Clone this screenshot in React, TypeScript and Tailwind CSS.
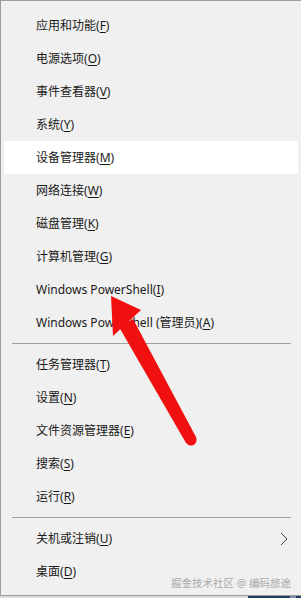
import { Fragment } from "react";

type Item = { label: string; hotkey: string; suffix?: string; active?: boolean; submenu?: boolean };

const groups: Item[][] = [
    [
        { label: "应用和功能", hotkey: "F" },
        { label: "电源选项", hotkey: "O" },
        { label: "事件查看器", hotkey: "V" },
        { label: "系统", hotkey: "Y" },
        { label: "设备管理器", hotkey: "M", active: true },
        { label: "网络连接", hotkey: "W" },
        { label: "磁盘管理", hotkey: "K" },
        { label: "计算机管理", hotkey: "G" },
        { label: "Windows PowerShell", hotkey: "I" },
        { label: "Windows PowerShell (管理员)", hotkey: "A" },
    ],
    [
        { label: "任务管理器", hotkey: "T" },
        { label: "设置", hotkey: "N" },
        { label: "文件资源管理器", hotkey: "E" },
        { label: "搜索", hotkey: "S" },
        { label: "运行", hotkey: "R" },
    ],
    [
        { label: "关机或注销", hotkey: "U", submenu: true },
        { label: "桌面", hotkey: "D" },
    ],
];

function MenuRow({ item }: { item: Item }) {
    return (
        <div
            className={`flex items-center h-[33px] ml-[3px] mr-[3px] pl-[32px] pr-[8px] text-[12px] text-[#1a1a1a] ${
                item.active ? "bg-white" : ""
            }`}
        >
            <span className="flex-1 whitespace-nowrap">
                {item.label}(<span className="underline underline-offset-2">{item.hotkey}</span>)
            </span>
            {item.submenu && (
                <svg width="8" height="14" viewBox="0 0 8 14" className="mr-[2px]">
                    <polyline points="1,1 7,7 1,13" fill="none" stroke="#444" strokeWidth="1" />
                </svg>
            )}
        </div>
    );
}

export default function App() {
    return (
        <div
            className="relative w-[301px] h-[598px] overflow-hidden bg-[#e6e6e6]"
            style={{ fontFamily: '"Noto Sans", "Noto Sans CJK SC", sans-serif' }}
        >
            <div className="bg-[#f0f0f0] border-t border-l border-b border-[#9c9c9c] pt-[8px] pb-[7px]">
                {groups.map((group, i) => (
                    <Fragment key={i}>
                        {i > 0 && (
                            <div className="pt-[4px] pb-[4px]">
                                <div className="h-px ml-[11px] mr-[10px] bg-[#a0a0a0]" />
                            </div>
                        )}
                        {group.map((item) => (
                            <MenuRow key={item.label} item={item} />
                        ))}
                    </Fragment>
                ))}
            </div>

            <div className="flex h-[2px]">
                <div className="w-[248px] bg-[#dcdcdc]" />
                <div className="w-[42px] bg-[#1e3a5f]" />
                <div className="w-[6px] bg-[#7f8ea3]" />
                <div className="flex-1 bg-[#1e3a5f]" />
            </div>

            <div className="absolute right-[10px] bottom-[10px] text-[10.5px] leading-none text-[#a9a9a9] whitespace-nowrap">
                掘金技术社区 @ 编码旅途
            </div>

            <svg className="absolute left-0 top-0 pointer-events-none" width="301" height="598" viewBox="0 0 301 598">
                <polygon points="133,319 119,327 186,443 196,437" fill="#f01010" />
                <circle cx="191" cy="440" r="5.6" fill="#f01010" />
                <polygon points="111,296 113,336 141,310" fill="#f01010" />
            </svg>
        </div>
    );
}
